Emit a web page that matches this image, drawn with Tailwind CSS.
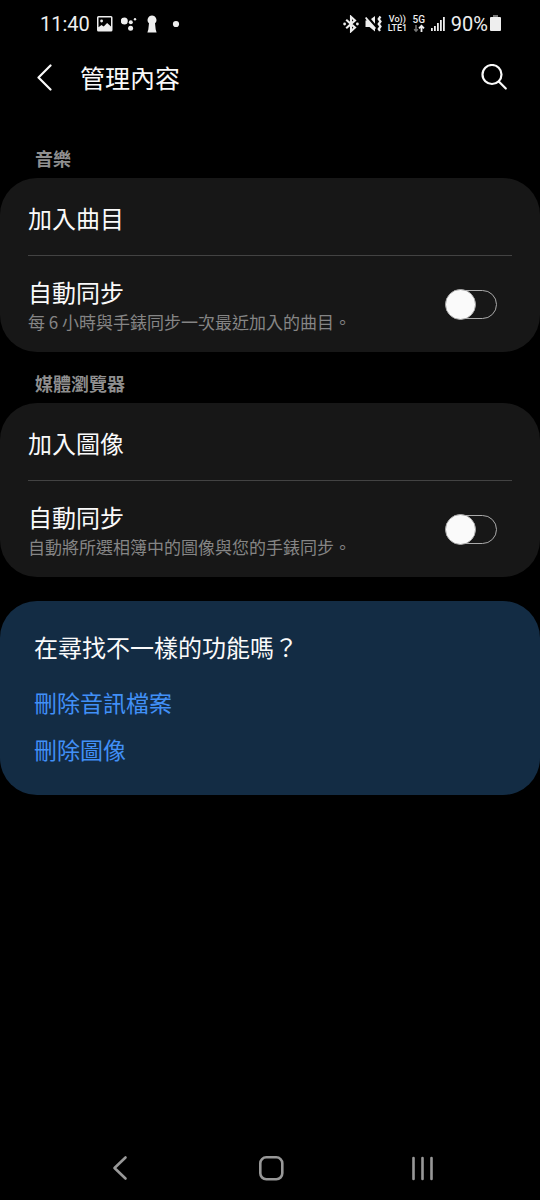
<!DOCTYPE html>
<html lang="zh-Hant">
<head>
<meta charset="utf-8">
<meta name="viewport" content="width=device-width, initial-scale=1">
<title>管理內容</title>
<script src="https://cdn.jsdelivr.net/npm/@tailwindcss/browser@4"></script>
</head>
<body class="flex min-h-screen flex-col bg-black font-['Noto_Sans_CJK_TC',sans-serif] text-[#fafafa]">
  <div class="flex h-12 items-center justify-between pr-[39px] pl-10 font-['Roboto',sans-serif] text-[20px] leading-6 text-[#eeeeee]">
    <div class="flex items-center">
      <span class="w-[57px]">11:40</span>
      <svg class="mr-2 h-4 w-4" viewBox="0 0 16 16" aria-hidden="true"><path fill="#eee" fill-rule="evenodd" d="M1.500 0h12.500a1.500 1.500 0 0 1 1.500 1.500v12.500a1.500 1.500 0 0 1-1.500 1.500H1.500A1.500 1.500 0 0 1 0 14V1.500A1.500 1.500 0 0 1 1.500 0ZM1.500 1.500v9.700l3-2.200 2.200 1.500 3.400-3.500 3.900 3.400V1.500Z"/><circle cx="4.600" cy="5" r="1.400" fill="#eee"/></svg>
      <svg class="mr-2.5 h-4 w-4" viewBox="0 0 16 16" fill="#eee" aria-hidden="true"><circle cx="3.300" cy="5" r="3.500"/><circle cx="9.800" cy="6.300" r="2"/><circle cx="14" cy="3.300" r="1.200"/><circle cx="9.600" cy="12.200" r="2.500"/></svg>
      <svg class="mr-[15px] h-[18px] w-[10px]" viewBox="0 0 10 18" fill="#eee" aria-hidden="true"><path d="M5 .5A4.500 4.500 0 0 1 8 8.300L8.700 14.500l.9 3H.4l.9-3L2 8.300A4.500 4.500 0 0 1 5 .5Z"/></svg>
      <svg class="h-2 w-2" viewBox="0 0 8 8" fill="#eee" aria-hidden="true"><circle cx="4" cy="4" r="3.100"/></svg>
    </div>
    <div class="flex items-center">
      <svg class="mr-1.5 h-[18px] w-4" viewBox="0 0 16 18" fill="none" stroke="#eee" stroke-width="2.100" aria-hidden="true"><path d="M3.200 4.800 12 12.600 8 16.200V1.800L12 5.400 3.200 13.200"/><circle cx="1.600" cy="9" r="1.400" fill="#eee" stroke="none"/><circle cx="14.400" cy="9" r="1.400" fill="#eee" stroke="none"/></svg>
      <svg class="mr-1.5 h-[18px] w-[17px]" viewBox="0 0 17 18" aria-hidden="true"><path fill="#eee" d="M0 3 1.300 2 11 13l-1 1v2.500L4.500 12H.5V5.500h1.200ZM6 4l4-3v7.800Z"/><path fill="none" stroke="#eee" stroke-width="2.200" d="M15.500 1.500 13.700 4l1.800 2.500L13.700 9l1.800 2.500-1.800 2.500 1.300 2"/></svg>
      <div class="mr-1.5 flex w-[19px] flex-col items-center text-[9px] leading-[9px] font-medium"><span>Vo))</span><span>LTE1</span></div>
      <div class="mr-1.5 flex w-3 flex-col items-center text-[10px] leading-[9px] font-medium"><span>5G</span>
        <svg class="h-[9px] w-3" viewBox="0 0 12 9" fill="none" stroke-width="1.500" aria-hidden="true"><path stroke="#777" d="M3 1v6M1.200 5.200 3 7.200l1.800-2"/><path stroke="#eee" stroke-width="1.800" d="M8.500 8V2M6 4.300l2.500-2.600L11 4.300"/></svg>
      </div>
      <svg class="mr-1.5 h-4 w-[14px]" viewBox="0 0 14 16" fill="#eee" aria-hidden="true"><path d="M0 12h1.800v3H0zM3 10h1.800v5H3zM6 7h1.800v8H6zM9 4h1.800v11H9zM12 1h1.800v14H12z"/></svg>
      <span class="mr-0.5">90%</span>
      <svg class="h-[18px] w-[11px]" viewBox="0 0 11 18" aria-hidden="true"><path fill="#777" d="M3 0h5v2H3z"/><rect y="2" width="11" height="14" rx="1" fill="#eee"/></svg>
    </div>
  </div>

  <header class="flex h-[60px] items-center pr-8 pl-8">
    <button type="button" aria-label="返回" class="flex h-10 w-12 items-center">
      <svg class="h-7 w-6" viewBox="0 0 24 28" fill="none" stroke="#fafafa" stroke-width="2.200" stroke-linecap="round" stroke-linejoin="round"><path d="M18.500 1.500 6.500 13.500l12 12"/></svg>
    </button>
    <h1 class="flex-1 pb-0.5 text-[25px] leading-9">管理內容</h1>
    <button type="button" aria-label="搜尋" class="flex h-10 w-7 items-center">
      <svg class="h-7 w-7" viewBox="0 0 28 28" fill="none" stroke="#fafafa" stroke-width="2.200" stroke-linecap="round"><circle cx="12" cy="10.500" r="9.500"/><path d="m18.800 17.500 7 7"/></svg>
    </button>
  </header>

  <main>
    <section class="pt-9">
      <h2 class="h-[34px] pl-[35px] text-[18px] leading-7 font-bold text-[#8f8f8f]">音樂</h2>
      <div class="rounded-[37px] bg-[#171717] px-7">
        <button type="button" class="block h-[78px] w-full border-b border-[#434343] pt-0.5 text-left text-[24px] leading-9">加入曲目</button>
        <div class="flex h-24 items-center justify-between pr-[15px]">
          <label for="sync-music">
            <span class="block text-[24px] leading-9">自動同步</span>
            <span class="block text-[17px] leading-6 text-[#858585]">每 6 小時與手錶同步一次最近加入的曲目。</span>
          </label>
          <input id="sync-music" type="checkbox" role="switch" class="relative h-[29px] w-[51px] shrink-0 appearance-none rounded-full border border-[#aaaaaa] before:absolute before:-top-0.5 before:-left-0.5 before:h-[31px] before:w-[31px] before:rounded-full before:border before:border-[#aaaaaa] before:bg-[#fafafa] checked:bg-[#3e82f1] checked:before:left-5">
        </div>
      </div>
    </section>

    <section class="pt-[17px]">
      <h2 class="h-[34px] pl-[35px] text-[18px] leading-7 font-bold text-[#8f8f8f]">媒體瀏覽器</h2>
      <div class="rounded-[37px] bg-[#171717] px-7">
        <button type="button" class="block h-[78px] w-full border-b border-[#434343] pt-0.5 text-left text-[24px] leading-9">加入圖像</button>
        <div class="flex h-24 items-center justify-between pr-[15px]">
          <label for="sync-images">
            <span class="block text-[24px] leading-9">自動同步</span>
            <span class="block text-[17px] leading-6 text-[#858585]">自動將所選相簿中的圖像與您的手錶同步。</span>
          </label>
          <input id="sync-images" type="checkbox" role="switch" class="relative h-[29px] w-[51px] shrink-0 appearance-none rounded-full border border-[#aaaaaa] before:absolute before:-top-0.5 before:-left-0.5 before:h-[31px] before:w-[31px] before:rounded-full before:border before:border-[#aaaaaa] before:bg-[#fafafa] checked:bg-[#3e82f1] checked:before:left-5">
        </div>
      </div>
    </section>

    <section class="mt-6 flex flex-col items-start rounded-[37px] bg-[#132c44] px-[34px] pt-7 pb-7">
      <h2 class="mb-5 text-[24px] leading-9">在尋找不一樣的功能嗎？</h2>
      <a href="#delete-audio" class="mb-3 text-[23px] leading-[35px] text-[#4190f7]">刪除音訊檔案</a>
      <a href="#delete-images" class="text-[23px] leading-[35px] text-[#4190f7]">刪除圖像</a>
    </section>
  </main>

  <nav class="mt-auto grid h-[65px] grid-cols-3 items-center px-[45px]">
    <button type="button" aria-label="返回" class="flex justify-center"><svg class="h-7 w-7" viewBox="0 0 28 28" fill="none" stroke="#989898" stroke-width="2.600" stroke-linecap="round" stroke-linejoin="round"><path d="M19.500 3.500 8.500 14l11 10.500"/></svg></button>
    <button type="button" aria-label="主畫面" class="flex justify-center"><svg class="h-7 w-7" viewBox="0 0 28 28" fill="none" stroke="#989898" stroke-width="2.600"><rect x="4.300" y="3.300" width="22" height="22" rx="6"/></svg></button>
    <button type="button" aria-label="最近使用" class="flex justify-center"><svg class="h-7 w-7" viewBox="0 0 28 28" fill="none" stroke="#989898" stroke-width="2.600" stroke-linecap="round"><path d="M7.500 4v21M16.500 4v21M25.500 4v21"/></svg></button>
  </nav>
</body>
</html>
